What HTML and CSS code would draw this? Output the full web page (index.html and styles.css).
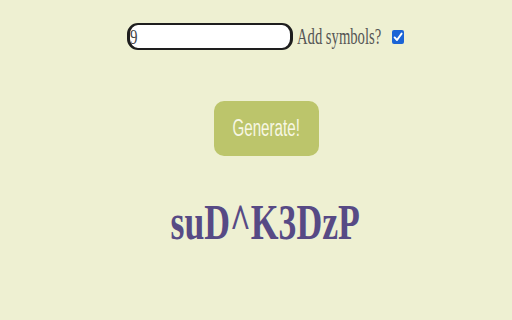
FILE: index.html
```html
<!DOCTYPE html>
<html>
<head>
<meta charset="utf-8">
<link rel="stylesheet" href="styles.css">
</head>
<body>
<main class="page">
  <div class="row">
    <div class="field"><span class="field-text">9</span></div>
    <span class="label"><span class="label-text">Add symbols?</span></span>
    <span class="check">
      <svg width="12" height="14" viewBox="0 0 12 14"><rect x="0" y="0" width="12" height="14" rx="2" fill="#1a64d6"/><path d="M2.6 7.4 L5 10 L9.6 3.6" fill="none" stroke="#fff" stroke-width="1.9" stroke-linecap="round" stroke-linejoin="round"/></svg>
    </span>
  </div>
  <button class="generate"><span class="generate-text">Generate!</span></button>
  <div class="result"><span class="result-text">suD^K3DzP</span></div>
</main>
</body>
</html>
```
FILE: styles.css
```css
html, body {
  margin: 0;
  padding: 0;
  background: #eef0d2;
  width: 512px;
  height: 320px;
  overflow: hidden;
}
.page {
  display: flex;
  flex-direction: column;
  align-items: center;
  padding-top: 23px;
  padding-left: 18px;
  font-family: "Liberation Serif", serif;
  color: #555;
}
.row {
  display: flex;
  align-items: center;
  height: 27px;
}
.field {
  box-sizing: border-box;
  width: 166px;
  height: 27px;
  border: 2px solid #1e1e1e;
  border-left-width: 3px;
  border-right-width: 3px;
  border-radius: 11px;
  background: #fff;
  display: flex;
  align-items: center;
  padding-left: 0;
  overflow: hidden;
}
.field-text {
  display: inline-block;
  font-size: 22px;
  line-height: 1;
  color: #444;
  transform: scaleX(0.68);
  transform-origin: left center;
}
.label {
  display: inline-block;
  width: 88px;
  margin-left: 4px;
  overflow: visible;
  white-space: nowrap;
}
.label-text {
  display: inline-block;
  font-size: 24px;
  transform: scaleX(0.61);
  transform-origin: left center;
  color: #555;
}
.check {
  display: flex;
  margin-left: 7px;
  width: 12px;
  height: 14px;
}
.generate {
  margin-top: 51px;
  width: 105px;
  height: 55px;
  border: none;
  border-radius: 10px;
  background: #bcc56b;
  padding: 0;
  display: flex;
  align-items: center;
  justify-content: center;
  transform: translateX(1px);
}
.generate-text {
  display: inline-block;
  font-family: "Liberation Sans", Arial, sans-serif;
  font-size: 23px;
  color: #f7f7e4;
  transform: scaleX(0.66);
}
.result {
  margin-top: 37px;
}
.result-text {
  display: inline-block;
  font-size: 51px;
  font-weight: bold;
  color: #574a85;
  transform: scaleX(0.7);
  white-space: nowrap;
}
```
